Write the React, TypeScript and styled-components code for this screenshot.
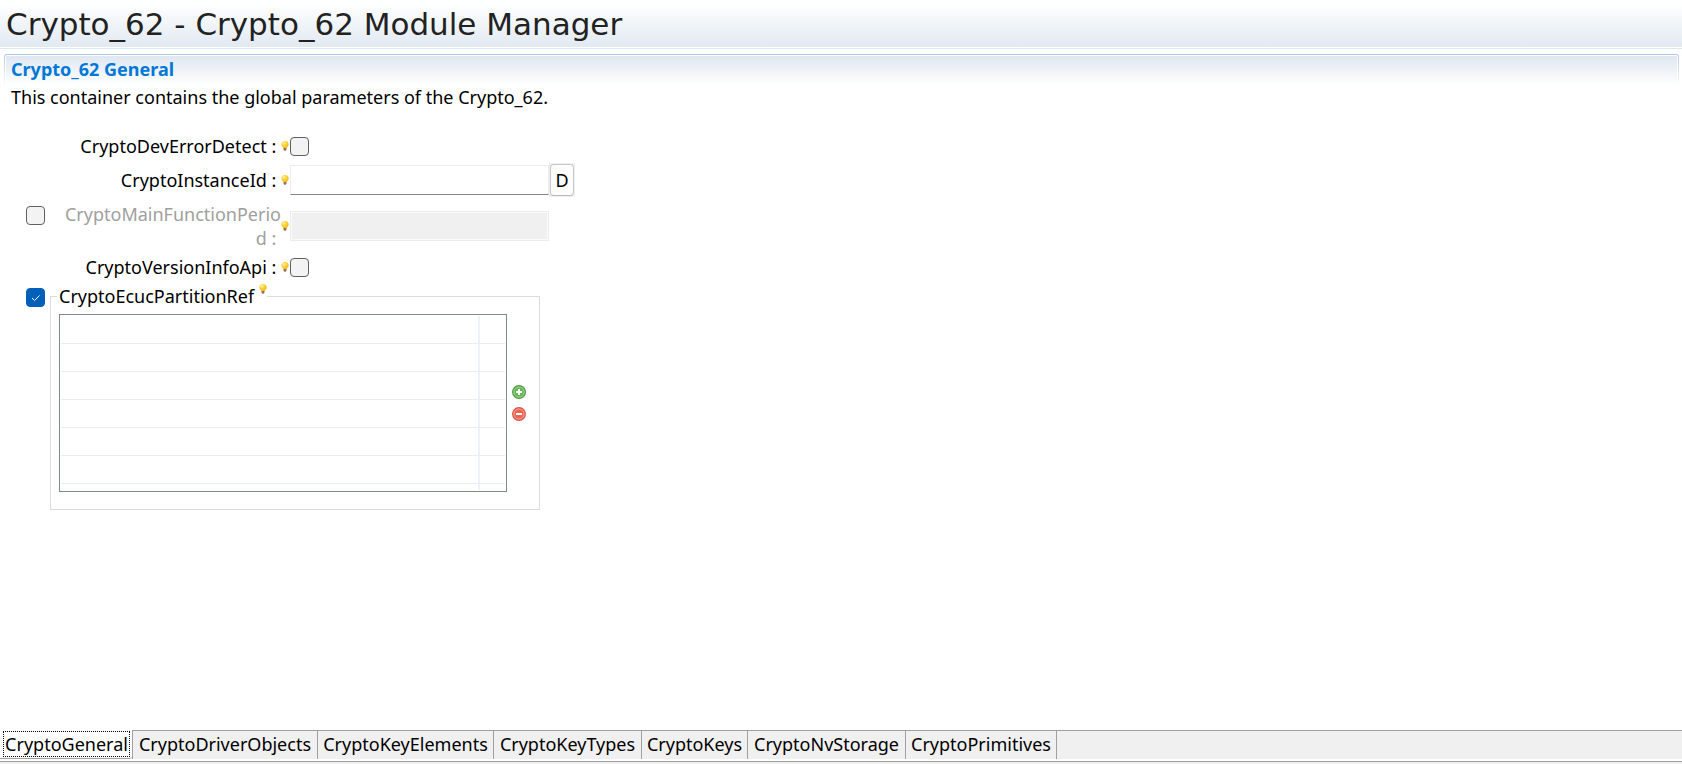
import React, { useId, useState } from "react";
import styled, { createGlobalStyle } from "styled-components";

const GlobalStyle = createGlobalStyle`
  *, *::before, *::after { box-sizing: border-box; }
  body {
    margin: 0;
    background: #ffffff;
    color: #000000;
    font-family: "Noto Sans", "Noto Sans CJK SC", sans-serif;
    font-size: 18px;
    line-height: 24px;
  }
  button, input { font: inherit; color: inherit; }
`;

const Page = styled.div`
  display: flex;
  flex-direction: column;
  min-height: 100vh;
`;

const Header = styled.header`
  height: 49px;
  padding: 4px 6px 0;
  border-bottom: 1px solid #dfe8f1;
  background: linear-gradient(#ffffff, #ffffff 3px, #e1e9f1 47px, #ffffff 47px);
`;

const PageTitle = styled.h1`
  margin: 0;
  color: #222222;
  font-family: "DejaVu Sans", sans-serif;
  font-size: 31px;
  font-weight: 400;
  line-height: 40px;
`;

const Section = styled.section`
  flex: 1;
  margin: 5px 3px 0 4px;
`;

const SectionHead = styled.div`
  padding: 1px 1px 0;
  border-radius: 3px 3px 0 0;
  background: linear-gradient(#b0c8e6, #ffffff 33px);
`;

const SectionHeadInner = styled.div`
  padding: 1px 1px 0;
  border-radius: 2px 2px 0 0;
  background: #ffffff;
`;

const SectionTitle = styled.h2`
  margin: 0;
  padding: 1px 5px 4px;
  background: linear-gradient(#dfe7f0, #ffffff);
  color: #0078d7;
  font-size: 18px;
  font-weight: 700;
  line-height: 24px;
`;

const Description = styled.p`
  margin: 0 0 25px;
  padding-left: 7px;
`;

const Form = styled.form`
  display: flex;
  flex-direction: column;
  gap: 5px;
  padding-left: 22px;
`;

const FieldRow = styled.div`
  display: grid;
  grid-template-columns: 31px 224px 9px auto;
  align-items: center;
  justify-content: start;
`;

const Toggle = styled.div`
  align-self: start;
  padding-top: 4px;
  display: flex;
`;

const FieldLabel = styled.label<{ $muted?: boolean }>`
  grid-column: 2;
  text-align: right;
  word-break: break-all;
  color: ${(p) => (p.$muted ? "#a0a0a0" : "#000000")};
`;

const FieldControl = styled.div`
  display: flex;
  align-items: center;
`;

const CheckWrap = styled.span`
  position: relative;
  display: flex;
  width: 19px;
  height: 19px;

  svg {
    position: absolute;
    inset: 0;
    pointer-events: none;
  }
`;

const CheckInput = styled.input`
  appearance: none;
  width: 19px;
  height: 19px;
  margin: 0;
  border: 1px solid #606060;
  border-radius: 4px;
  background: #f3f3f3;

  &:checked {
    border-color: #005fb8;
    background: #005fb8;
  }
`;

const TextInput = styled.input`
  width: 259px;
  height: 30px;
  padding: 0 4px;
  border: 1px solid #ececec;
  border-bottom-color: #868686;
  border-radius: 0;
  background: #ffffff;
  outline: none;

  &:disabled {
    border-color: #ececec;
    background: #f0f0f0;
    box-shadow: inset 0 0 0 1px #fbfbfb;
  }
`;

const ButtonWell = styled.span`
  display: flex;
  padding: 1px;
  background: #f0f0f0;
`;

const DefaultButton = styled.button`
  width: 24px;
  height: 32px;
  padding: 0;
  border: 1px solid #c8c8c8;
  border-bottom-color: #b8b8b8;
  border-radius: 4px;
  background: #fdfdfd;
`;

const GroupRow = styled.div`
  display: flex;
  align-items: flex-start;
  gap: 5px;
`;

const Group = styled.fieldset`
  display: flex;
  align-items: center;
  gap: 5px;
  width: 490px;
  margin: 0;
  padding: 6px 8px 17px;
  border: 1px solid #dcdcdc;
`;

const Legend = styled.legend`
  display: flex;
  gap: 5px;
  margin-left: -2px;
  padding: 0 0 0 2px;
`;

const RefTable = styled.table`
  width: 448px;
  padding: 1px;
  border: 1px solid #828790;
  border-spacing: 0;
  table-layout: fixed;
`;

const ValueCol = styled.col`
  width: 419px;
`;

const Cell = styled.td<{ $filler?: boolean }>`
  height: ${(p) => (p.$filler ? "6px" : "28px")};
  padding: 0;
  border-bottom: ${(p) => (p.$filler ? "none" : "1px solid #ededed")};

  &:first-child {
    border-right: 2px solid #edf1fa;
  }
`;

const ActionColumn = styled.div`
  display: flex;
  flex-direction: column;
  gap: 8px;
`;

const IconButton = styled.button`
  display: flex;
  padding: 0;
  border: none;
  background: none;
`;

const TabBar = styled.nav`
  display: flex;
  height: 29px;
`;

const Tab = styled.button<{ $width: number }>`
  flex: none;
  width: ${(p) => p.$width}px;
  padding: 0 0 2px;
  border: solid #a0a0a0;
  border-width: 1px 1px 0 0;
  background: #f0f0f0;
  line-height: 24px;
  white-space: nowrap;

  &[aria-selected="true"] {
    padding: 1px 2px 1px 3px;
    border-width: 0 0 1px;
    border-bottom-right-radius: 3px;
    background: #ffffff;
  }
  &[aria-selected="true"] + & {
    border-left-width: 1px;
  }
`;

const TabFocus = styled.span`
  display: block;
  height: 26px;
  border: 1px dotted #000000;
`;

const TabFill = styled.div`
  flex: 1;
  border-top: 1px solid #a0a0a0;
  background: #f0f0f0;
`;

const StatusEdge = styled.footer`
  height: 3px;
  margin-top: 2px;
  border-top: 1px solid #a0a0a0;
  background: #f0f0f0;
`;

function Bulb() {
  const id = useId();
  return (
    <svg width="8" height="10" viewBox="0 0 8 10" aria-hidden="true">
      <defs>
        <radialGradient id={id} cx="0.35" cy="0.3" r="0.75">
          <stop offset="0" stopColor="#fff3a8" />
          <stop offset="0.45" stopColor="#ffd23c" />
          <stop offset="1" stopColor="#f5b41c" />
        </radialGradient>
      </defs>
      <path d="M4 0C1.6 0 0.3 1.5 0.3 3.4C0.3 5.2 1.9 5.8 2.4 7.2H5.6C6.1 5.8 7.7 5.2 7.7 3.4C7.7 1.5 6.4 0 4 0Z" fill={`url(#${id})`} />
      <path d="M2.6 7H5.4V8.8L4.8 9.8H3.2L2.6 8.8Z" fill="#a57a55" />
      <path d="M2.6 8H5.4" stroke="#7d6a60" strokeWidth="0.6" />
    </svg>
  );
}

function RoundIcon({ kind }: { kind: "add" | "remove" }) {
  const add = kind === "add";
  return (
    <svg width="14" height="14" viewBox="0 0 14 14" aria-hidden="true">
      <circle cx="7" cy="7" r="6.4" fill={add ? "#66b655" : "#ee6352"} stroke={add ? "#4c9a43" : "#d0584a"} strokeWidth="1.1" />
      <circle cx="7" cy="7" r="5.1" fill="none" stroke={add ? "#a9d99d" : "#f9aaa0"} strokeWidth="0.9" />
      <path d={add ? "M4 7H10M7 4V10" : "M4 7H10"} stroke="#ffffff" strokeWidth="2" />
    </svg>
  );
}

function CheckBox({ id, label, initial = false }: { id?: string; label?: string; initial?: boolean }) {
  const [on, setOn] = useState(initial);
  return (
    <CheckWrap>
      <CheckInput id={id} aria-label={label} type="checkbox" checked={on} onChange={() => setOn(!on)} />
      {on && (
        <svg width="19" height="19" viewBox="0 0 19 19" aria-hidden="true">
          <path d="M6 10L8.5 12.5L13.5 7.5" fill="none" stroke="#ffffff" strokeWidth="1" />
        </svg>
      )}
    </CheckWrap>
  );
}

function Field(props: { id: string; name: string; optional?: boolean; children: React.ReactNode }) {
  return (
    <FieldRow>
      {props.optional && (
        <Toggle>
          <CheckBox label={`Enable ${props.name}`} />
        </Toggle>
      )}
      <FieldLabel htmlFor={props.id} $muted={props.optional}>
        {props.name} :&nbsp;
      </FieldLabel>
      <Bulb />
      <FieldControl>{props.children}</FieldControl>
    </FieldRow>
  );
}

const tabs: [string, number][] = [
  ["CryptoGeneral", 132],
  ["CryptoDriverObjects", 186],
  ["CryptoKeyElements", 176],
  ["CryptoKeyTypes", 148],
  ["CryptoKeys", 106],
  ["CryptoNvStorage", 158],
  ["CryptoPrimitives", 151],
];

const emptyRows = [0, 1, 2, 3, 4, 5];

export default function App() {
  return (
    <Page>
      <GlobalStyle />
      <Header>
        <PageTitle>Crypto_62 - Crypto_62 Module Manager</PageTitle>
      </Header>
      <Section>
        <SectionHead>
          <SectionHeadInner>
            <SectionTitle>Crypto_62 General</SectionTitle>
          </SectionHeadInner>
        </SectionHead>
        <Description>This container contains the global parameters of the Crypto_62.</Description>
        <Form>
          <Field id="dev-error" name="CryptoDevErrorDetect">
            <CheckBox id="dev-error" />
          </Field>
          <Field id="instance" name="CryptoInstanceId">
            <TextInput id="instance" type="text" />
            <ButtonWell>
              <DefaultButton type="button">D</DefaultButton>
            </ButtonWell>
          </Field>
          <Field id="period" name="CryptoMainFunctionPeriod" optional>
            <TextInput id="period" type="text" disabled />
          </Field>
          <Field id="version" name="CryptoVersionInfoApi">
            <CheckBox id="version" />
          </Field>
          <GroupRow>
            <Toggle>
              <CheckBox label="Enable CryptoEcucPartitionRef" initial />
            </Toggle>
            <Group>
              <Legend>
                CryptoEcucPartitionRef
                <Bulb />
              </Legend>
              <RefTable>
                <colgroup>
                  <ValueCol />
                  <col />
                </colgroup>
                <tbody>
                  {emptyRows.map((r) => (
                    <tr key={r}>
                      <Cell />
                      <Cell />
                    </tr>
                  ))}
                  <tr>
                    <Cell $filler />
                    <Cell $filler />
                  </tr>
                </tbody>
              </RefTable>
              <ActionColumn>
                <IconButton type="button" aria-label="Add">
                  <RoundIcon kind="add" />
                </IconButton>
                <IconButton type="button" aria-label="Remove">
                  <RoundIcon kind="remove" />
                </IconButton>
              </ActionColumn>
            </Group>
          </GroupRow>
        </Form>
      </Section>
      <TabBar role="tablist">
        {tabs.map(([name, width], i) => (
          <Tab key={name} type="button" role="tab" aria-selected={i === 0} $width={width}>
            {i === 0 ? <TabFocus>{name}</TabFocus> : name}
          </Tab>
        ))}
        <TabFill />
      </TabBar>
      <StatusEdge />
    </Page>
  );
}
